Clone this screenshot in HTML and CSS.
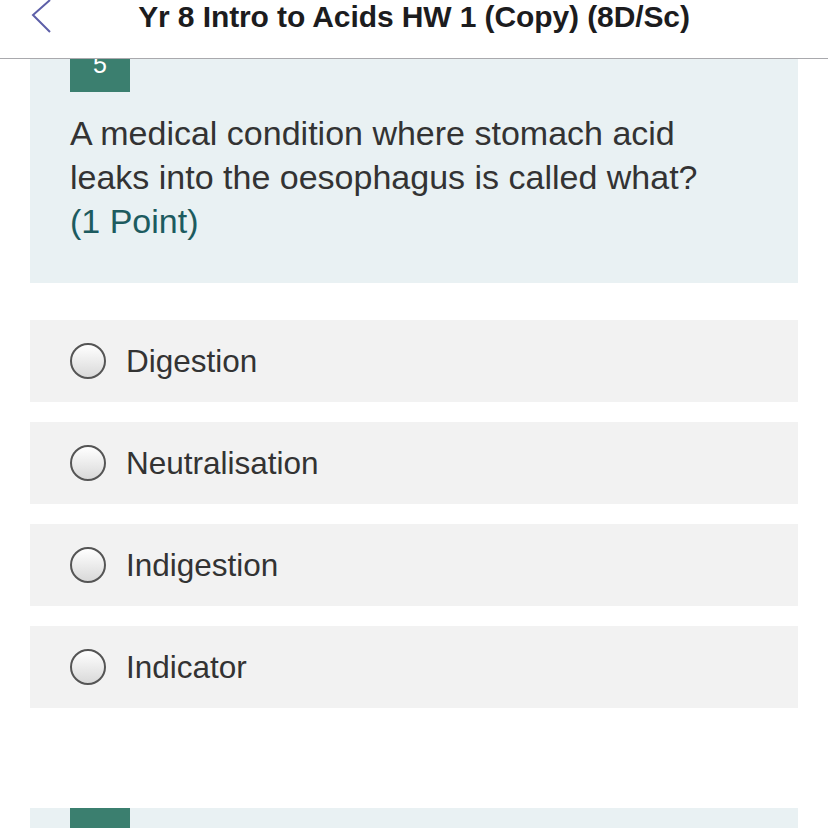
FILE: index.html
```html
<!DOCTYPE html>
<html lang="en">
<head>
<meta charset="utf-8">
<title>Yr 8 Intro to Acids HW 1 (Copy) (8D/Sc)</title>
<link rel="stylesheet" href="styles.css">
</head>
<body>
<div class="app">
  <header class="topbar">
    <button class="back" aria-label="Back">
      <svg width="24" height="36" viewBox="0 0 24 36"><path d="M20 0 L3 15 L20 32" fill="none" stroke="#5d5fa8" stroke-width="2"/></svg>
    </button>
    <h1 class="title">Yr 8 Intro to Acids HW 1 (Copy) (8D/Sc)</h1>
  </header>
  <main class="viewport">
    <div class="scroll">
      <section class="question">
        <div class="badge">5</div>
        <p class="qtext">A medical condition where stomach acid leaks into the oesophagus is called what? <span class="points">(1 Point)</span></p>
      </section>
      <ul class="options">
        <li class="option"><span class="radio"></span><span class="label">Digestion</span></li>
        <li class="option"><span class="radio"></span><span class="label">Neutralisation</span></li>
        <li class="option"><span class="radio"></span><span class="label">Indigestion</span></li>
        <li class="option"><span class="radio"></span><span class="label">Indicator</span></li>
      </ul>
      <section class="question next">
        <div class="badge"></div>
      </section>
    </div>
  </main>
</div>
</body>
</html>
```

FILE: styles.css
```css
* { box-sizing: border-box; }
html, body { margin: 0; padding: 0; background: #fff; }
body { font-family: "Liberation Sans", Arial, sans-serif; color: #333; }
.app { width: 828px; height: 828px; display: flex; flex-direction: column; overflow: hidden; }
.topbar {
  height: 59px; flex: none; display: flex; align-items: flex-start; justify-content: center;
  border-bottom: 1px solid #a9a9ad; background: #fff; position: relative;
}
.back {
  position: absolute; left: 30px; top: 0; padding: 0; border: 0; background: none; display: block;
}
.back svg { display: block; }
.title {
  margin: 0; font-size: 30px; font-weight: 700; color: #1c1c1e; line-height: 34px; padding-top: 0; letter-spacing: -0.1px;
}
.viewport { flex: 1; overflow: hidden; }
.scroll { margin-top: -28px; }
.question { background: #e9f1f3; margin: 0 30px; padding: 0 40px 40px; }
.badge {
  width: 60px; height: 61px; background: #3b7f6f; color: #fff; font-size: 25px;
  display: flex; align-items: center; justify-content: center; padding-top: 5px;
}
.qtext { margin: 19px 0 0; font-size: 34px; line-height: 44px; color: #333; padding-right: 16px; }
.points { color: #1d5b5f; display: block; }
.options { list-style: none; margin: 37px 30px 0; padding: 0; display: flex; flex-direction: column; gap: 20px; }
.option {
  height: 82px; background: #f2f2f2; display: flex; align-items: center; padding-left: 40px; gap: 20px;
}
.radio {
  width: 36px; height: 36px; border-radius: 50%; border: 2px solid #555;
  background: linear-gradient(#ffffff, #d9d9d9); flex: none;
}
.label { font-size: 31.5px; color: #333; }
.question.next { margin-top: 100px; height: 80px; padding: 0 40px; }
```
